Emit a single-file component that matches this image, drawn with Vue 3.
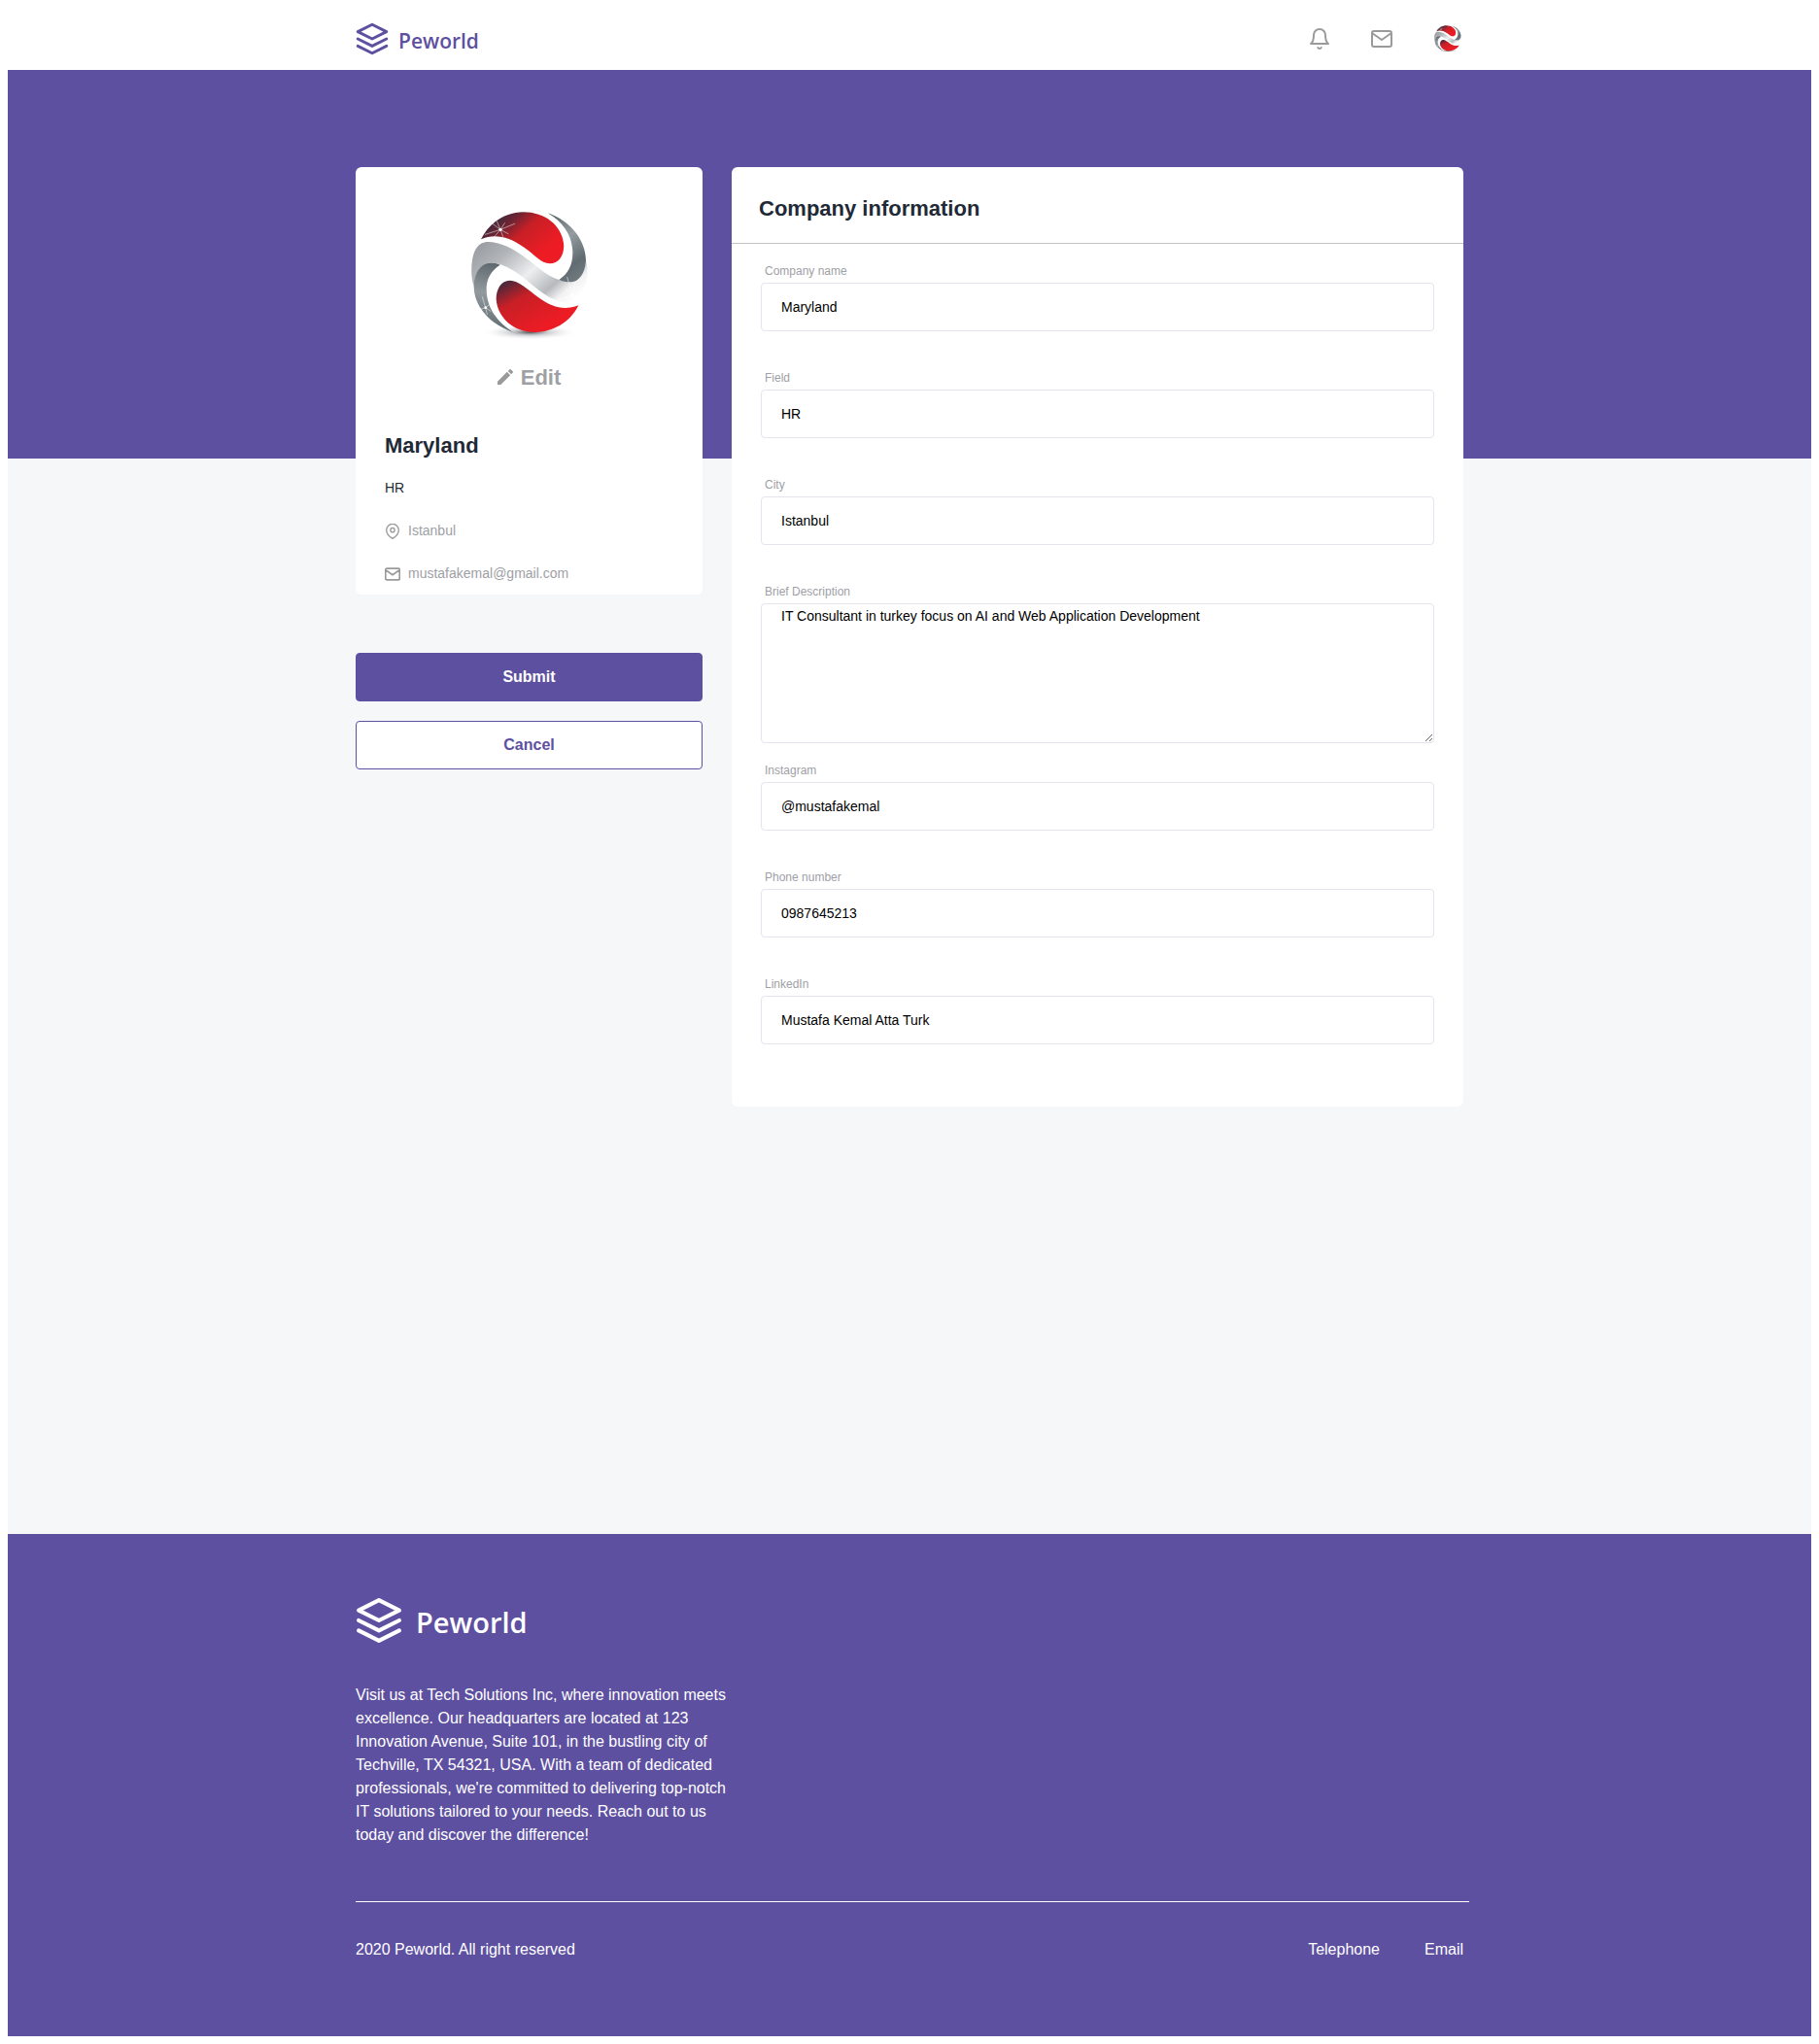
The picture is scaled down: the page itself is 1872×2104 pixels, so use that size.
<script setup>
import { reactive } from 'vue'

const company = reactive({
  name: 'Maryland',
  field: 'HR',
  city: 'Istanbul',
  email: 'mustafakemal@gmail.com',
  description: 'IT Consultant in turkey focus on AI and Web Application Development',
  instagram: '@mustafakemal',
  phone: '0987645213',
  linkedin: 'Mustafa Kemal Atta Turk'
})

const fields = [
  { key: 'name', label: 'Company name' },
  { key: 'field', label: 'Field' },
  { key: 'city', label: 'City' },
  { key: 'description', label: 'Brief Description', multiline: true },
  { key: 'instagram', label: 'Instagram' },
  { key: 'phone', label: 'Phone number' },
  { key: 'linkedin', label: 'LinkedIn' }
]
</script>

<template>
  <div class="page">
    <svg class="symbols" aria-hidden="true">
      <defs>
        <linearGradient id="red-top" x1="0.05" y1="0.3" x2="0.75" y2="0.8">
          <stop offset="0" stop-color="#3f2a3c" />
          <stop offset="0.2" stop-color="#6a2433" />
          <stop offset="0.48" stop-color="#c81f26" />
          <stop offset="1" stop-color="#ed1c24" />
        </linearGradient>
        <linearGradient id="red-bottom" x1="0.05" y1="0.05" x2="0.7" y2="0.8">
          <stop offset="0" stop-color="#3f2a3c" />
          <stop offset="0.38" stop-color="#c81f26" />
          <stop offset="1" stop-color="#ed1c24" />
        </linearGradient>
        <linearGradient id="silver" x1="0" y1="0.15" x2="1" y2="0.75">
          <stop offset="0" stop-color="#9a9ea3" />
          <stop offset="0.22" stop-color="#b0b3b7" />
          <stop offset="0.52" stop-color="#eceeef" />
          <stop offset="0.76" stop-color="#b7babd" />
          <stop offset="0.88" stop-color="#f2f2f3" />
          <stop offset="1" stop-color="#ffffff" />
        </linearGradient>
        <linearGradient id="steel-right" x1="0.2" y1="0" x2="0.6" y2="1">
          <stop offset="0" stop-color="#5d686e" />
          <stop offset="0.4" stop-color="#959da1" />
          <stop offset="0.8" stop-color="#616c72" />
          <stop offset="1" stop-color="#6d777c" />
        </linearGradient>
        <linearGradient id="steel-left" x1="0.5" y1="0" x2="0.4" y2="1">
          <stop offset="0" stop-color="#5d686e" />
          <stop offset="0.45" stop-color="#929a9e" />
          <stop offset="1" stop-color="#5d686e" />
        </linearGradient>
        <radialGradient id="ground">
          <stop offset="0" stop-color="#3d3f43" stop-opacity="0.9" />
          <stop offset="0.4" stop-color="#8b8e94" stop-opacity="0.4" />
          <stop offset="1" stop-color="#ffffff" stop-opacity="0" />
        </radialGradient>
      </defs>
      <symbol id="globe" viewBox="374 170 360 399" preserveAspectRatio="none">
        <ellipse cx="555" cy="545" rx="150" ry="24" fill="url(#ground)" />
        <path fill="url(#red-top)" d="M404 258C430 205 480 174 535 174C602 174 652 215 659 270C663 305 645 333 617 333C588 333 572 306 535 282C490 250 445 240 404 258Z" />
        <path fill="url(#silver)" d="M375 345C377 300 390 266 427 266C480 266 530 305 580 345C610 370 640 388 680 389C705 388 722 365 729 325L733 350C733 395 722 430 702 455C680 460 650 455 615 437C570 410 540 375 500 352C470 336 450 330 430 331C400 333 383 370 382 405C376 385 374 365 375 345Z" />
        <path fill="url(#steel-right)" d="M610 177C680 200 727 260 728 325C725 365 705 390 680 390C665 390 655 387 645 383C672 365 687 340 687 300C687 250 660 205 610 177Z" />
        <path fill="url(#steel-left)" d="M382 405C381 370 400 331 432 331C445 331 455 333 463 337C435 355 421 380 421 412C421 470 455 515 503 545C430 520 383 465 382 405Z" />
        <path fill="url(#red-bottom)" d="M705 462C680 515 625 545 570 545C505 545 455 500 451 443C451 410 467 385 493 385C520 385 545 410 585 440C625 468 660 478 705 462Z" />
        <g stroke="#fff" stroke-width="2" stroke-opacity="0.75" stroke-linecap="round">
          <path d="M464 228L508 210M464 228L417 243M464 228L453 202M464 228L472 250M464 228L440 210M464 228L488 241M464 228L447 248M464 228L477 208" />
          <path d="M686 430L670 375M686 430L733 408M686 430L640 447M686 430L706 452M686 430L664 410M686 430L689 462M686 430L694 396" />
          <path d="M418 469L408 436M418 469L434 457M418 469L400 475M418 469L423 490M418 469L434 480" />
        </g>
        <g fill="#fff">
          <circle cx="464" cy="228" r="5" />
          <circle cx="686" cy="430" r="6" />
          <circle cx="418" cy="469" r="4" />
        </g>
      </symbol>
      <symbol id="layers" viewBox="0.5 0.5 23 23">
        <g fill="none" stroke="currentColor" stroke-width="2" stroke-linecap="round" stroke-linejoin="round">
          <path d="M12 2L2 7l10 5 10-5z" />
          <path d="M2 12l10 5 10-5M2 17l10 5 10-5" />
        </g>
      </symbol>
      <symbol id="bell" viewBox="0 0 24 24">
        <path d="M18 8A6 6 0 0 0 6 8c0 7-3 9-3 9h18s-3-2-3-9M13.73 21a2 2 0 0 1-3.46 0" fill="none" stroke="currentColor" stroke-width="2" stroke-linecap="round" stroke-linejoin="round" />
      </symbol>
      <symbol id="mail" viewBox="0 0 24 24">
        <path d="M4 4h16c1.1 0 2 .9 2 2v12c0 1.1-.9 2-2 2H4c-1.1 0-2-.9-2-2V6c0-1.1.9-2 2-2zM22 6l-10 7L2 6" fill="none" stroke="currentColor" stroke-width="2" stroke-linecap="round" stroke-linejoin="round" />
      </symbol>
      <symbol id="mail-small" viewBox="1 1 22 22">
        <path d="M4 4h16c1.1 0 2 .9 2 2v12c0 1.1-.9 2-2 2H4c-1.1 0-2-.9-2-2V6c0-1.1.9-2 2-2zM22 6l-10 7L2 6" fill="none" stroke="currentColor" stroke-width="2.4" stroke-linecap="round" stroke-linejoin="round" />
      </symbol>
      <symbol id="pin" viewBox="0 0 24 24">
        <g fill="none" stroke="currentColor" stroke-width="2" stroke-linejoin="round">
          <path d="M21.5 10c0 7-9.5 13-9.5 13S2.5 17 2.5 10a9.5 9.5 0 0 1 19 0z" />
          <circle cx="12" cy="10" r="3.2" />
        </g>
      </symbol>
      <symbol id="pencil" viewBox="3 3 18 18">
        <path fill="currentColor" d="M3 17.25V21h3.75L17.81 9.94l-3.75-3.75L3 17.25zM20.71 7.04a1 1 0 0 0 0-1.41l-2.34-2.34a1 1 0 0 0-1.41 0l-1.83 1.83 3.75 3.75 1.83-1.83z" />
      </symbol>
    </svg>

    <header class="topbar">
      <div class="container topbar-row">
        <a class="brand" href="#">
          <svg class="brand-icon"><use href="#layers" /></svg>
          <span>Peworld</span>
        </a>
        <nav class="actions">
          <a href="#" aria-label="Notifications"><svg class="action-icon"><use href="#bell" /></svg></a>
          <a href="#" aria-label="Messages"><svg class="action-icon"><use href="#mail" /></svg></a>
          <a class="avatar" href="#" aria-label="Profile"><svg class="avatar-icon"><use href="#globe" /></svg></a>
        </nav>
      </div>
    </header>

    <main class="main">
      <form class="container columns" @submit.prevent>
        <aside>
          <section class="card profile">
            <svg class="logo"><use href="#globe" /></svg>
            <button class="edit" type="button">
              <svg class="edit-icon"><use href="#pencil" /></svg>
              Edit
            </button>
            <h2 class="title profile-name">{{ company.name }}</h2>
            <div class="details">
              <p>{{ company.field }}</p>
              <p class="meta"><svg class="meta-icon"><use href="#pin" /></svg>{{ company.city }}</p>
              <p class="meta"><svg class="meta-icon"><use href="#mail-small" /></svg>{{ company.email }}</p>
            </div>
          </section>
          <div class="buttons">
            <button class="btn btn-primary" type="submit">Submit</button>
            <button class="btn btn-outline" type="button">Cancel</button>
          </div>
        </aside>

        <section class="card">
          <div class="card-head">
            <h2 class="title">Company information</h2>
          </div>
          <div class="fields">
            <div v-for="f in fields" :key="f.key" class="field" :class="{ 'field-area': f.multiline }">
              <label :for="f.key">{{ f.label }}</label>
              <textarea v-if="f.multiline" :id="f.key" v-model="company[f.key]" class="control area"></textarea>
              <input v-else :id="f.key" v-model="company[f.key]" class="control" type="text" />
            </div>
          </div>
        </section>
      </form>
    </main>

    <footer class="footer">
      <div class="container">
        <a class="brand brand-large" href="#">
          <svg class="brand-icon"><use href="#layers" /></svg>
          <span>Peworld</span>
        </a>
        <p class="about">
          Visit us at Tech Solutions Inc, where innovation meets excellence. Our headquarters are located at 123
          Innovation Avenue, Suite 101, in the bustling city of Techville, TX 54321, USA. With a team of dedicated
          professionals, we're committed to delivering top-notch IT solutions tailored to your needs. Reach out to us
          today and discover the difference!
        </p>
        <hr class="rule" />
        <div class="legal">
          <span>2020 Peworld. All right reserved</span>
          <nav class="links">
            <a href="#">Telephone</a>
            <a href="#">Email</a>
          </nav>
        </div>
      </div>
    </footer>
  </div>
</template>

<style>
body {
  margin: 0;
  background: #fff;
}
</style>

<style scoped>
.page {
  --purple: #5e50a1;
  --muted: #9ea0a5;
  --ink: #1f2a36;
  padding: 0 8px 8px;
  font-family: "Liberation Sans", Arial, sans-serif;
  color: var(--ink);
}

.page * {
  box-sizing: border-box;
}

.symbols {
  position: absolute;
  width: 0;
  height: 0;
}

svg {
  display: block;
  flex: none;
}

a {
  color: inherit;
  text-decoration: none;
}

p,
h2 {
  margin: 0;
}

.container {
  max-width: 1140px;
  margin: 0 auto;
}

.topbar {
  padding-top: 8px;
}

.topbar-row {
  display: flex;
  align-items: center;
  justify-content: space-between;
  height: 64px;
}

.brand {
  display: inline-flex;
  align-items: center;
  gap: 10px;
  color: var(--purple);
  font: 600 21px/24px "Open Sans", "Noto Sans", sans-serif;
}

.brand span {
  padding-top: 3px;
}

.brand-icon {
  width: 34px;
  height: 34px;
}

.brand-large {
  gap: 14px;
  color: #fff;
  font-size: 29px;
  line-height: 36px;
}

.brand-large .brand-icon {
  width: 48px;
  height: 48px;
}

.actions {
  display: flex;
  align-items: center;
  gap: 40px;
  color: #9a9a9a;
}

.action-icon {
  width: 24px;
  height: 24px;
}

.avatar {
  padding: 2px;
}

.avatar-icon {
  width: 28px;
  height: 28px;
}

.main {
  padding: 100px 0 440px;
  background: linear-gradient(var(--purple) 400px, #f6f7f9 400px);
}

.columns {
  display: grid;
  grid-template-columns: 357px minmax(0, 1fr);
  align-items: start;
  gap: 30px;
}

.card {
  background: #fff;
  border-radius: 6px;
}

.title {
  font-size: 22px;
  line-height: 25px;
  font-weight: 700;
}

.profile {
  display: flex;
  flex-direction: column;
  align-items: center;
  padding: 45px 30px 11px;
}

.logo {
  width: 120px;
  height: 133px;
}

.edit {
  display: flex;
  align-items: center;
  gap: 8px;
  margin: 26px 0 45px;
  padding: 0;
  border: 0;
  background: none;
  color: var(--muted);
  font: 700 22px/25px "Liberation Sans", Arial, sans-serif;
}

.edit-icon {
  width: 16px;
  height: 16px;
  margin-bottom: 2px;
  color: #9a9a9a;
}

.profile-name {
  align-self: stretch;
  margin-bottom: 21px;
}

.details {
  display: flex;
  flex-direction: column;
  gap: 23px;
  align-self: stretch;
  font-size: 14px;
  line-height: 21px;
}

.meta {
  display: flex;
  align-items: center;
  gap: 8px;
  color: var(--muted);
}

.meta-icon {
  width: 16px;
  height: 16px;
  color: #9a9a9a;
}

.buttons {
  display: grid;
  gap: 20px;
  margin-top: 60px;
}

.btn {
  height: 50px;
  border: 1px solid var(--purple);
  border-radius: 4px;
  font: 700 16px/24px "Liberation Sans", Arial, sans-serif;
}

.btn-primary {
  background: var(--purple);
  color: #fff;
}

.btn-outline {
  background: #fff;
  color: var(--purple);
}

.card-head {
  padding: 30px 28px 23px;
  border-bottom: 1px solid #c4c4c4;
}

.fields {
  padding: 18px 30px 26px;
}

.field {
  display: flex;
  flex-direction: column;
  gap: 2px;
  margin-bottom: 38px;
}

.field-area {
  margin-bottom: 18px;
}

.field label {
  padding-left: 4px;
  color: var(--muted);
  font-size: 12px;
  line-height: 20px;
}

.control {
  width: 100%;
  height: 50px;
  padding: 0 20px;
  border: 1px solid #e2e5ed;
  border-radius: 4px;
  background: #fff;
  color: #000;
  font: 14px "Liberation Sans", Arial, sans-serif;
}

.area {
  height: 144px;
  padding: 4px 20px;
}

.footer {
  padding: 65px 0 77px;
  background: var(--purple);
  color: #fff;
  font-size: 16px;
  line-height: 24px;
}

.footer .brand {
  display: flex;
}

.about {
  max-width: 388px;
  margin-top: 41px;
}

.rule {
  height: 1px;
  margin: 56px -6px 37px 0;
  border: 0;
  background: #fff;
}

.legal {
  display: flex;
  justify-content: space-between;
}

.links {
  display: flex;
  gap: 46px;
}

@media (max-width: 900px) {
  .columns {
    grid-template-columns: minmax(0, 1fr);
  }

  .rule {
    margin-right: 0;
  }
}
</style>
